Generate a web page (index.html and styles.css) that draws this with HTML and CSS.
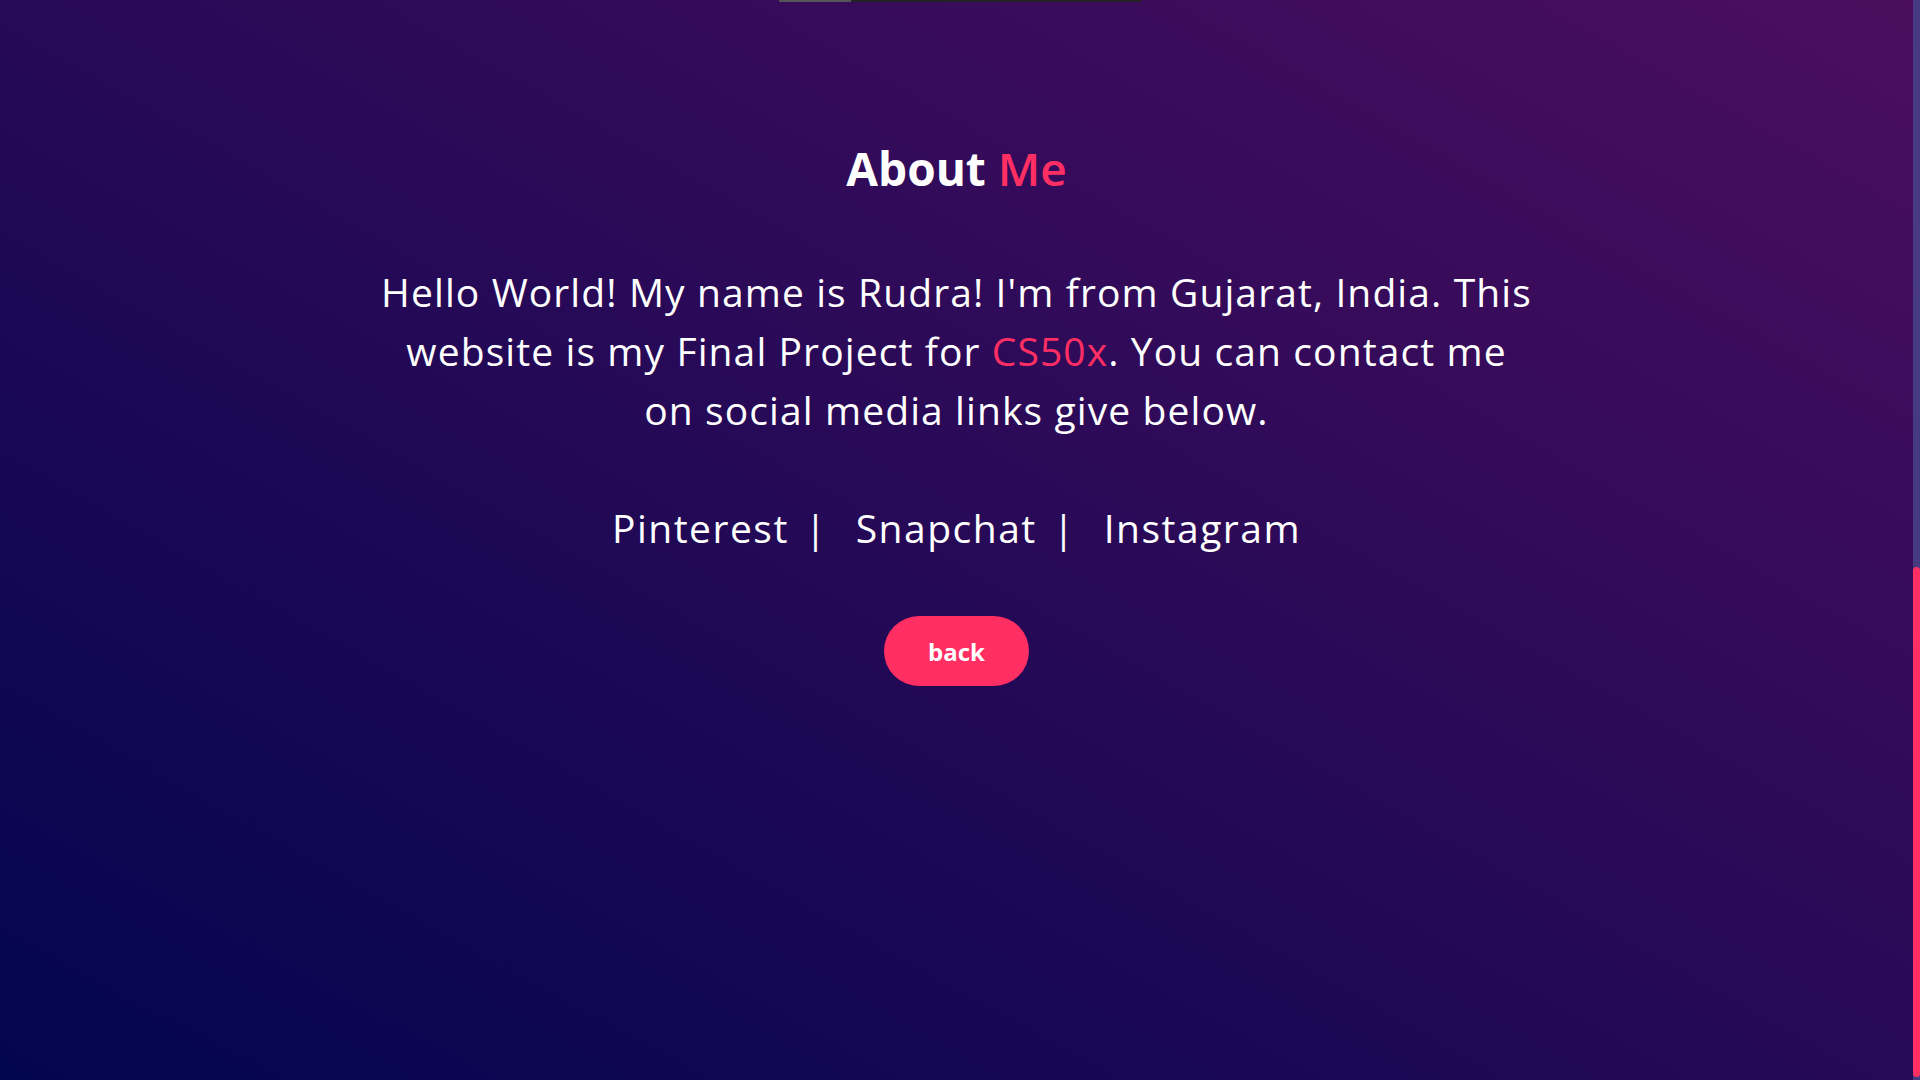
FILE: index.html
```html
<!DOCTYPE html>
<html lang="en">
<head>
<meta charset="utf-8">
<title>About Me</title>
<link rel="stylesheet" href="styles.css">
</head>
<body>
<div class="page">
  <div class="topbar"><span class="topbar-fill"></span></div>
  <main class="about">
    <h1 class="title">About <span class="accent">Me</span></h1>
    <p class="intro">Hello World! My name is Rudra! I'm from Gujarat, India. This website is my Final Project for <span class="accent">CS50x</span>. You can contact me on social media links give below.</p>
    <nav class="socials">
      <a class="social" href="#">Pinterest</a>
      <span class="sep">|</span>
      <a class="social" href="#">Snapchat</a>
      <span class="sep">|</span>
      <a class="social" href="#">Instagram</a>
    </nav>
    <a class="back" href="#">back</a>
  </main>
</div>
<div class="scrollbar"><div class="thumb"></div></div>
</body>
</html>
```
FILE: styles.css
```css
html, body {
  margin: 0;
  height: 100%;
}
body {
  display: flex;
  height: 100vh;
  overflow: hidden;
  background: linear-gradient(to top right, #02054f 0%, #4b0e5f 100%);
  font-family: "Open Sans", "Liberation Sans", sans-serif;
  color: #ffffff;
}
.page {
  flex: 1;
  display: flex;
  flex-direction: column;
  align-items: center;
}
.topbar {
  width: 362px;
  height: 2px;
  margin-left: 7px;
  background: #232323;
  display: flex;
}
.topbar-fill {
  width: 72px;
  background: #555555;
}
.about {
  display: flex;
  flex-direction: column;
  align-items: center;
  text-align: center;
}
.title {
  margin: 138px 0 0;
  font-size: 46px;
  line-height: 56px;
  font-weight: 700;
}
.accent {
  color: #ff2e63;
}
.title .accent {
  font-weight: 600;
}
.intro {
  width: 1155px;
  margin: 66px 0 0;
  font-size: 39px;
  line-height: 59px;
  font-weight: 400;
  letter-spacing: 1.1px;
}
.socials {
  margin-top: 61px;
  font-size: 39px;
  line-height: 56px;
  letter-spacing: 1.5px;
  display: flex;
  align-items: center;
  gap: 16px;
}
.social {
  color: #ffffff;
  text-decoration: none;
}
.sep {
  margin-right: 12px;
}
.back {
  margin-top: 60px;
  width: 145px;
  height: 70px;
  border-radius: 35px;
  background: #ff2e63;
  color: #ffffff;
  text-decoration: none;
  font-size: 24px;
  font-weight: 700;
  display: flex;
  align-items: center;
  justify-content: center;
}
.scrollbar {
  width: 7px;
  background: #463a82;
  display: flex;
  flex-direction: column;
  justify-content: flex-end;
  padding-bottom: 3px;
}
.thumb {
  height: 510px;
  background: #ff2e63;
  border-radius: 4px;
}
```
